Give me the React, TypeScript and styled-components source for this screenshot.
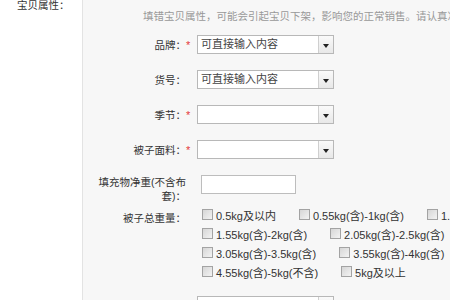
import styled, { createGlobalStyle } from "styled-components";

const GlobalStyle = createGlobalStyle`
  body {
    margin: 0;
    overflow: hidden;
    background: #fff;
    font-family: "Liberation Sans", "Noto Sans CJK SC", sans-serif;
    font-size: 10.5px;
    color: #333;
  }
`;

const weightRows = [
  ["0.5kg及以内", "0.55kg(含)-1kg(含)", "1.05kg(含)-1.5kg(含)"],
  ["1.55kg(含)-2kg(含)", "2.05kg(含)-2.5kg(含)", "2.55kg(含)-3kg(含)"],
  ["3.05kg(含)-3.5kg(含)", "3.55kg(含)-4kg(含)", "4.05kg(含)-4.5kg(含)"],
  ["4.55kg(含)-5kg(不含)", "5kg及以上"],
];

const selectRows = [
  { label: "品牌：", required: true, value: "可直接输入内容" },
  { label: "货号：", required: false, value: "可直接输入内容" },
  { label: "季节：", required: true, value: "" },
  { label: "被子面料：", required: true, value: "" },
];

function Select({ value }: { value?: string }) {
  return (
    <SelectBox>
      <SelectText>{value}</SelectText>
      <SelectButton>
        <Arrow />
      </SelectButton>
    </SelectBox>
  );
}

export default function App() {
  return (
    <>
      <GlobalStyle />
      <Page>
        <Side>
          <SideLabel>宝贝属性：</SideLabel>
        </Side>
        <Main>
          <Hint>填错宝贝属性，可能会引起宝贝下架，影响您的正常销售。请认真准确填写</Hint>
          <Form>
            {selectRows.map(row => (
              <Row key={row.label}>
                <Label>{row.label}</Label>
                <Star>{row.required ? "*" : ""}</Star>
                <Select value={row.value} />
              </Row>
            ))}
            <Row $top>
              <Label $wrap>填充物净重(不含布套)：</Label>
              <Star />
              <TextInput />
            </Row>
            <Row $top $gap={8}>
              <Label $wrap>被子总重量：</Label>
              <Star />
              <Options>
                {weightRows.map((line, i) => (
                  <OptionLine key={i}>
                    {line.map(text => (
                      <Option key={text}>
                        <Check />
                        {text}
                      </Option>
                    ))}
                  </OptionLine>
                ))}
              </Options>
            </Row>
            <Row $gap={15}>
              <Label />
              <Star />
              <Select />
            </Row>
          </Form>
        </Main>
      </Page>
    </>
  );
}

const Page = styled.div`
  display: flex;
  min-height: 100vh;
`;

const Side = styled.div`
  width: 82px;
  flex-shrink: 0;
  border-right: 1px solid #e3e3e3;
  background: #fff;
`;

const SideLabel = styled.div`
  margin-top: -2px;
  padding-left: 17px;
  line-height: 14px;
  color: #333;
`;

const Main = styled.div`
  flex: 1;
  background: #f7f7f7;
  padding: 9px 0 0 15px;
  white-space: nowrap;
`;

const Hint = styled.div`
  margin-left: 45px;
  line-height: 14px;
  color: #999;
`;

const Form = styled.div`
  display: flex;
  flex-direction: column;
  margin-top: 12px;
`;

const Row = styled.div<{ $top?: boolean; $gap?: number }>`
  display: flex;
  align-items: ${({ $top }) => ($top ? "flex-start" : "center")};
  margin-top: ${({ $gap }) => ($gap ?? 16)}px;

  &:first-child {
    margin-top: 0;
  }
`;

const Label = styled.div<{ $wrap?: boolean }>`
  width: 88px;
  flex-shrink: 0;
  text-align: right;
  line-height: 14px;
  white-space: ${({ $wrap }) => ($wrap ? "normal" : "nowrap")};
  color: #333;
`;

const Star = styled.span`
  width: 11px;
  flex-shrink: 0;
  color: #e4393c;
  font-size: 11px;
  line-height: 14px;
`;

const SelectBox = styled.div`
  display: flex;
  width: 135px;
  height: 17px;
  border: 1px solid #b8b8b8;
  background: #fff;
`;

const SelectText = styled.div`
  flex: 1;
  padding-left: 3px;
  line-height: 17px;
  font-size: 11px;
  color: #444;
`;

const SelectButton = styled.div`
  width: 14px;
  display: flex;
  align-items: center;
  justify-content: center;
  border-left: 1px solid #cfcfcf;
  background: linear-gradient(#fafafa, #e8e8e8);
`;

const Arrow = styled.span`
  width: 0;
  height: 0;
  margin-top: 2px;
  border-left: 3px solid transparent;
  border-right: 3px solid transparent;
  border-top: 4px solid #222;
`;

const TextInput = styled.div`
  margin-left: 4px;
  width: 93px;
  height: 17px;
  border: 1px solid #bdbdbd;
  background: #fff;
`;

const Options = styled.div`
  margin-left: 5px;
  display: flex;
  flex-direction: column;
  margin-top: -6px;
`;

const OptionLine = styled.div`
  display: flex;
  height: 19px;
  align-items: center;
`;

const Option = styled.label`
  display: inline-flex;
  align-items: center;
  margin-right: 23px;
  font-size: 11px;
  color: #333;
`;

const Check = styled.span`
  width: 9px;
  height: 9px;
  margin-right: 3px;
  border: 1px solid #a3a3a3;
  background: linear-gradient(135deg, #d6d6d6, #f3f3f3);
`;
